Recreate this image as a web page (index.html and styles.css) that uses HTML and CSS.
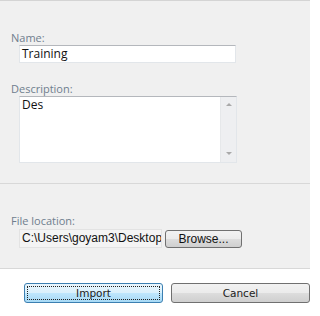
FILE: index.html
```html
<!DOCTYPE html>
<html lang="en">
<head>
  <meta charset="UTF-8" />
  <title>Import</title>
  <link rel="stylesheet" href="styles.css">
</head>
<body>

<div class="panel">
  <!-- Name + description -->
  <div class="section details">
    <div class="label">Name:</div>
    <div class="textbox name-box">Training</div>

    <div class="label desc-label">Description:</div>
    <div class="textbox desc-box">
      <div class="desc-text">Des</div>
      <div class="scrollbar">
        <span class="arrow up"></span>
        <span class="arrow down"></span>
      </div>
    </div>
  </div>

  <!-- File location -->
  <div class="section location">
    <div class="label">File location:</div>
    <div class="file-row">
      <div class="path-box">C:\Users\goyam3\Desktop</div>
      <button class="btn browse">Browse...</button>
    </div>
  </div>
</div>

<div class="footer">
  <button class="btn wide primary"><span class="focus">Import</span></button>
  <button class="btn wide">Cancel</button>
</div>

</body>
</html>
```

FILE: styles.css
```css
html, body {
  margin: 0; padding: 0;
  background: #fff;
  font-family: "Open Sans", "Noto Sans", sans-serif;
  overflow: hidden;
}

.panel {
  width: 310px;
  background: #f0f0f0;
  border-top: 1px solid #d4d4d4;
}

.section {
  border-bottom: 1px solid #d8d8d8;
  box-sizing: border-box;
}

.details { height: 183px; padding-top: 29px; }
.location { height: 85px; padding-top: 29px; }

.label {
  margin-left: 11px;
  font-size: 11px;
  line-height: 15px;
  color: #6f7e8e;
}

.desc-label { margin-top: 18px; }

.textbox {
  margin-left: 19px;
  background: #fff;
  border: 1px solid #e2e6ea;
  border-top-color: #b4b7bc;
  box-sizing: border-box;
  color: #111;
  font-size: 12px;
}

.name-box {
  width: 217px;
  height: 18px;
  line-height: 15px;
  padding-left: 2px;
}

.desc-box {
  width: 218px;
  height: 67px;
  display: flex;
}

.desc-text { flex: 1; padding: 0 2px; line-height: 15px; }

.scrollbar {
  width: 15px;
  background: #eeeff1;
  border-left: 1px solid #e6e8ea;
  display: flex;
  flex-direction: column;
  justify-content: space-between;
  align-items: center;
  padding: 6px 0 7px;
}

.arrow {
  width: 0; height: 0;
  border-left: 3px solid transparent;
  border-right: 3px solid transparent;
}
.arrow.up { border-bottom: 3px solid #a9a9a9; }
.arrow.down { border-top: 3px solid #a9a9a9; }

.file-row {
  display: flex;
  align-items: flex-start;
  margin: 1px 0 0 19px;
  gap: 3px;
}

.path-box {
  width: 143px;
  height: 19px;
  box-sizing: border-box;
  background: #f4f4f4;
  border: 1px solid #e3e3e3;
  font-family: "Liberation Sans", Arial, sans-serif;
  font-size: 12px;
  line-height: 17px;
  padding-left: 2px;
  white-space: nowrap;
  overflow: hidden;
  color: #111;
}

.btn {
  box-sizing: border-box;
  border: 1px solid #707070;
  border-radius: 3px;
  background: linear-gradient(#f2f2f2 0%, #ebebeb 50%, #dddddd 51%, #cfcfcf 100%);
  color: #111;
  padding: 0;
  font-family: "Liberation Sans", Arial, sans-serif;
}

.browse {
  width: 77px;
  height: 18px;
  margin-top: 1px;
  font-size: 12px;
  line-height: 14px;
}

.footer {
  display: flex;
  gap: 8px;
  padding: 14px 0 0 24px;
}

.wide {
  width: 139px;
  height: 20px;
  font-family: Tahoma, "DejaVu Sans", sans-serif;
  font-size: 10.5px;
  color: #222;
}

.primary {
  border-color: #3c7fb1;
  background: linear-gradient(#eaf6fd 0%, #d9f0fc 50%, #bee6fd 51%, #a7d9f5 100%);
  padding: 2px;
}

.focus {
  display: block;
  height: 100%;
  box-sizing: border-box;
  border: 1px dotted #222;
  line-height: 13px;
}
```
